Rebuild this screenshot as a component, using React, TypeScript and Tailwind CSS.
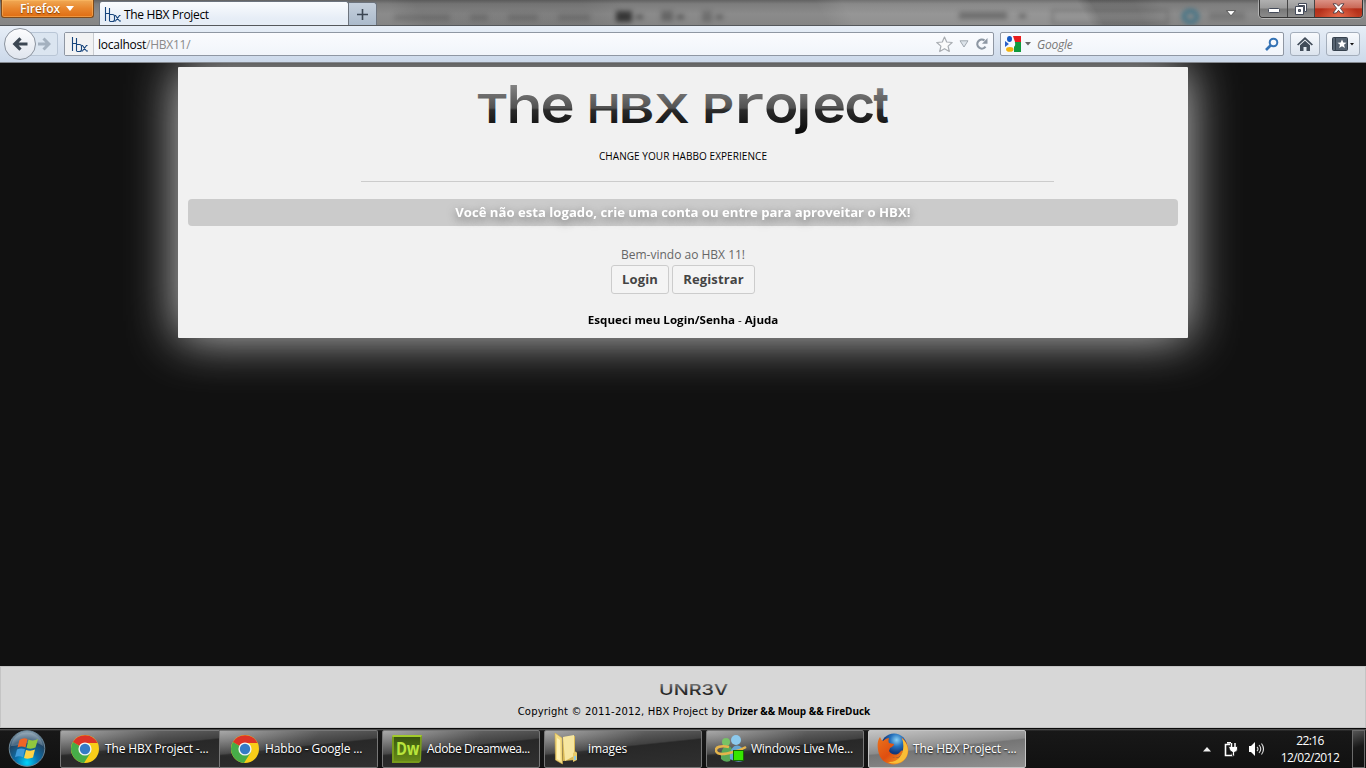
import React from "react";

const ui = "font-['Open_Sans','Noto_Sans',sans-serif]";

function HbxIcon({ className = "" }: { className?: string }) {
  return (
    <svg width="17" height="16" viewBox="0 0 17 16" className={className} fill="none" stroke="#17457c" strokeWidth="1.1">
      <path d="M1.5 0v14M5.5 1v13M1.500 6.500h4M5.500 7.500h3q2 0 2 2v3q0 2-2 2H5.500" />
      <path d="M10.500 8.500h1l4 5.500h1.500M16.500 8.500h-1l-4 5.500h-1" />
    </svg>
  );
}

function TitleBar() {
  return (
    <div className="relative flex h-[26px] shrink-0 overflow-hidden border-b border-[#55585c] bg-[linear-gradient(180deg,#626262_0,#7d7d7d_4px,#8b8b8b_14px,#858585_100%)]">
      <div className="pointer-events-none absolute inset-0 bg-[linear-gradient(60deg,transparent_0_29%,#00000014_31%_43%,transparent_46%_60%,#ffffff18_62%_79%,#00000018_80%_83%,transparent_85%)]" />
      <div className="pointer-events-none absolute left-[394px] top-[12px] flex blur-[2.5px]" aria-hidden="true">
        <i className="mr-[20px] mt-[2px] h-[7px] w-[56px] bg-[#0002]" />
        <i className="mr-[20px] mt-[2px] h-[7px] w-[18px] bg-[#0002]" />
        <i className="mr-[20px] mt-[2px] h-[7px] w-[30px] bg-[#0002]" />
        <i className="mr-[26px] mt-[2px] h-[7px] w-[32px] bg-[#0002]" />
        <i className="mr-[4px] -mt-px h-[11px] w-[16px] bg-[#0009]" />
        <i className="mr-[18px] mt-[3px] h-[4px] w-[7px] bg-[#0006]" />
        <i className="mr-[4px] -mt-px h-[10px] w-[12px] bg-[#0004]" />
        <i className="mr-[18px] mt-[3px] h-[4px] w-[7px] bg-[#0006]" />
        <i className="mr-[4px] -mt-px h-[11px] w-[10px] bg-[#0003]" />
        <i className="mr-[236px] mt-[3px] h-[4px] w-[7px] bg-[#0005]" />
        <i className="mr-[12px] h-[7px] w-[48px] bg-[#0004]" />
        <i className="mr-[26px] mt-[2px] h-[4px] w-[7px] bg-[#0005]" />
        <i className="mr-[14px] -mt-[2px] h-[14px] w-[116px] border border-[#0006]" />
        <i className="mr-[10px] -mt-[3px] h-[15px] w-[17px] rounded-full border-[4px] border-[#3a7186]" />
        <i className="h-[8px] w-[36px] bg-[#0002]" />
      </div>
      <button className={`relative ml-px flex h-[18px] w-[93px] items-center rounded-b-[3px] border border-t-0 border-[#7d4a1b] bg-[linear-gradient(#f0a955,#e8862d_50%,#df6c12)] pl-[18px] text-[12px] font-semibold text-white shadow-[inset_0_0_0_1px_#ffbf6a80] [text-shadow:0_1px_1px_#803c00] ${ui}`}>
        <span>Firefox</span>
        <svg className="ml-[6px]" width="8" height="5" viewBox="0 0 8 5"><path d="M0 0h8L4 5z" fill="#fff" /></svg>
      </button>
      <div className="relative ml-[5px] mt-px flex h-[25px] w-[250px] items-center rounded-t-[3px] border border-b-0 border-[#6d747e] bg-[linear-gradient(#fafcfe,#e6edf6_70%)] pl-[4px]">
        <HbxIcon className="mt-[2px]" />
        <span className={`ml-[3px] mt-[2px] whitespace-nowrap text-[12px] leading-[16px] -tracking-[0.32px] text-black ${ui}`}>The HBX Project</span>
      </div>
      <div className="relative mt-[2px] flex h-[24px] w-[28px] items-center justify-center rounded-tr-[3px] border border-b-0 border-l-0 border-[#6d747e] bg-[linear-gradient(#c5d0dd,#aab9ca)]">
        <svg width="11" height="11" viewBox="0 0 11 11"><path d="M5.5 0v11M0 5.5h11" stroke="#3b4653" strokeWidth="1.6" /></svg>
      </div>
      <div className="relative ml-auto flex">
        <svg className="mr-[23px] mt-[10px]" width="10" height="7" viewBox="0 0 10 7"><path d="M.5.6h9L5 5.800z" fill="#fff" stroke="#444" strokeWidth=".8" /></svg>
        <div className="mr-[3px] flex h-[18px] overflow-hidden rounded-b-[4px] border border-t-0 border-[#353535] shadow-[0_0_0_1px_#ffffff60]">
          <div className="flex w-[28px] items-center justify-center border-r border-[#444] bg-[linear-gradient(#b0b0b0,#9a9a9a_48%,#777_52%,#8c8c8c)]">
            <svg className="mt-[4px]" width="12" height="5" viewBox="0 0 12 5"><rect x=".5" y=".5" width="11" height="4" rx="1" fill="#fff" stroke="#444b5a" /></svg>
          </div>
          <div className="flex w-[27px] items-center justify-center border-r border-[#444] bg-[linear-gradient(#b0b0b0,#9a9a9a_48%,#777_52%,#8c8c8c)]">
            <svg width="12" height="12" viewBox="0 0 12 12" fill="#fff" stroke="#444b5a"><path d="M3.5.5h8v8h-2v-6h-6z" /><path fillRule="evenodd" d="M.5 3.5h8v8h-8zM3.5 6.5h2v2h-2z" /></svg>
          </div>
          <div className="flex w-[47px] items-center justify-center bg-[radial-gradient(ellipse_at_bottom,#e66a4b,transparent_60%),linear-gradient(#dc9285,#c96857_46%,#b32d18_52%,#bd3c23)]">
            <svg width="13" height="11" viewBox="0 0 13 11"><path d="M1 .8h3.3l2.2 2.4L8.700.8H12L8.400 5.300 12 10H8.700L6.500 7.300 4.300 10H1l3.600-4.700z" fill="#fff" stroke="#4c3a42" strokeWidth=".9" /></svg>
          </div>
        </div>
      </div>
    </div>
  );
}

function NavBar() {
  return (
    <div className="flex h-[37px] shrink-0 items-center border-b border-[#85898f] bg-[linear-gradient(#e7eef7,#ccd9ea)]">
      <div className="relative ml-[4px] h-[32px] w-[60px] shrink-0">
        <div className="absolute left-[20px] top-[4px] flex h-[24px] w-[34px] items-center justify-end rounded-r-[3px] border border-[#b9c6d6] bg-[#dbe5f0] pr-[6px]">
          <svg width="13" height="14" viewBox="0 0 13 14" fill="none" stroke="#a4b1bf" strokeWidth="3"><path d="M0 7h10M5.500 1.500l5.500 5.500-5.500 5.500" /></svg>
        </div>
        <div className="absolute left-0 top-0 flex size-[32px] items-center justify-center rounded-full border border-[#8b939e] bg-[linear-gradient(#fdfdfe,#dfe5ee)]">
          <svg width="16" height="16" viewBox="0 0 16 16" fill="none" stroke="#3c4753" strokeWidth="3.200"><path d="M15.500 8H3.500M8.500 2.300L2.800 8l5.700 5.700" /></svg>
        </div>
      </div>
      <div className="flex h-[24px] w-[930px] shrink-0 items-center rounded-[2px] border border-[#8f97a3] bg-[linear-gradient(#fafbfe,#f1f5fa)]">
        <div className="flex h-full w-[29px] items-center justify-center border-r border-[#c9ccd0] bg-[#f1f2f3]"><HbxIcon className="mt-[2px]" /></div>
        <span className={`ml-[4px] mt-px text-[12px] leading-[16px] -tracking-[0.25px] text-[#8a8a8a] ${ui}`}><span className="text-black">localhost</span>/HBX11/</span>
        <svg className="ml-auto" width="17" height="17" viewBox="0 0 17 17"><path d="M8.500 1l2.200 5 5.500.5-4.100 3.600 1.200 5.400-4.800-2.800-4.800 2.800 1.200-5.400L.8 6.500 6.300 6z" fill="#fbfbfb" stroke="#a9adb2" strokeWidth="1.200" strokeLinejoin="round" /></svg>
        <svg className="ml-[6px]" width="10" height="8" viewBox="0 0 10 8"><path d="M1 .8h8L5 7z" fill="#dce3ea" stroke="#a0a8b0" /></svg>
        <svg className="ml-[7px] mr-[5px]" width="12" height="12" viewBox="0 0 12 12"><path d="M9.500 8.700A4.500 4.500 0 1 1 8.500 2.400" fill="none" stroke="#8d97a3" strokeWidth="2.200" /><path d="M11.500 0v5.700H6z" fill="#8d97a3" /></svg>
      </div>
      <div className="ml-[6px] flex h-[24px] w-[284px] shrink-0 items-center rounded-[2px] border border-[#8f97a3] bg-[linear-gradient(#fafbfe,#f1f5fa)]">
        <svg className="ml-[4px]" width="16" height="16" viewBox="0 0 16 16">
          <path fill="#f7f9fc" d="M0 0h16v16H0z" /><path fill="#e91c1c" d="M8 0h8v6h-6z" /><path fill="#109a3d" d="M9 6h7v10H9z" /><path fill="#2b5fc7" d="M0 5l4 3-4 3z" />
          <circle cx="7" cy="8" r="3.200" fill="#f7f9fc" /><ellipse cx="4.500" cy="3" rx="2.500" ry="3" fill="#1459c4" /><ellipse cx="4.800" cy="13.400" rx="3.700" ry="2.300" fill="#f2b20d" />
        </svg>
        <svg className="ml-[4px]" width="6" height="4" viewBox="0 0 6 4"><path d="M0 0h6L3 3.500z" fill="#666" /></svg>
        <span className={`ml-[6px] mt-px text-[12px] italic leading-[16px] -tracking-[0.25px] text-[#777] ${ui}`}>Google</span>
        <svg className="ml-auto mr-[4px]" width="14" height="14" viewBox="0 0 14 14" fill="none" stroke="#3573b5"><circle cx="8.500" cy="5.500" r="3.800" strokeWidth="2" /><path d="M5.500 8.500L1 13" strokeWidth="2.600" /></svg>
      </div>
      <div className="ml-[6px] flex h-[24px] w-[30px] shrink-0 items-center justify-center rounded-[3px] border border-[#a4aebb] bg-[linear-gradient(#f8fafd,#dce4ee)]">
        <svg width="16" height="14" viewBox="0 0 16 14" fill="#414c59"><path d="M8 0l8 7.500-1.300 1L8 2.500l-6.700 6L0 7.500z" /><path d="M8 3.800l5 4.500V14H9.500v-4h-3v4H3V8.300z" /></svg>
      </div>
      <div className="ml-[6px] flex h-[24px] w-[34px] shrink-0 items-center justify-center rounded-[3px] border border-[#a4aebb] bg-[linear-gradient(#f8fafd,#dce4ee)]">
        <svg width="22" height="14" viewBox="0 0 22 14"><rect x=".5" y=".5" width="15" height="13" rx="1" fill="#566371" stroke="#36414d" /><path d="M3.500 1v12" stroke="#36414d" /><path d="M10 2.500l1.300 3 3.200.2-2.500 2 .9 3.200-2.900-1.700-2.900 1.700.9-3.200-2.500-2 3.200-.2z" fill="#fff" /><path d="M18 6h4l-2 2.500z" fill="#111" /></svg>
      </div>
    </div>
  );
}

// letter, x origin, font size, horizontal stretch, weight
const words: [string, number, number, number, number][][] = [
  [["T", 476, 40, 1.22, 600], ["h", 506, 52, 1.18, 500], ["e", 540.5, 53, 1.09, 600]],
  [["H", 587, 40, 1.12, 600], ["B", 618.5, 40, 1.36, 600], ["X", 654, 40, 1.24, 600]],
  [["P", 702, 40, 1.25, 600], ["r", 733.500, 53, 1.5, 500], ["o", 764, 53, 1.07, 600], ["j", 796.5, 53, 1.05, 600], ["e", 812.5, 53, 1.07, 600], ["c", 844.5, 53, 0.99, 600], ["t", 873.500, 52, 0.8, 700]],
];

function Logo() {
  return (
    <svg width="430" height="56" viewBox="468 80 430 56" className="block overflow-visible" role="img" aria-label="The HBX Project">
      <defs>
        <linearGradient id="ink" gradientUnits="userSpaceOnUse" x1="0" y1="-39" x2="0" y2="11">
          <stop offset="0" stopColor="#858585" /><stop offset=".48" stopColor="#515151" /><stop offset=".52" stopColor="#2b2b2b" /><stop offset="1" stopColor="#080808" />
        </linearGradient>
        <linearGradient id="inkJ" gradientUnits="userSpaceOnUse" x1="0" y1="-39" x2="0" y2="11">
          <stop offset=".19" stopColor="#777" stopOpacity="0" /><stop offset=".2" stopColor="#747474" /><stop offset=".48" stopColor="#515151" /><stop offset=".52" stopColor="#2b2b2b" /><stop offset="1" stopColor="#080808" />
        </linearGradient>
      </defs>
      {words.map((word, w) => (
        <g key={w} className="font-['Inter',sans-serif]">
          {word.map(([c, x, size, stretch, weight], i) => (
            <text key={i} transform={`translate(${x} 123) scale(${stretch} 1)`} fontSize={size} fontWeight={weight} fill={c === "j" ? "url(#inkJ)" : "url(#ink)"}>{c}</text>
          ))}
        </g>
      ))}
    </svg>
  );
}

function Page() {
  return (
    <main className="flex min-h-0 flex-1 flex-col items-center overflow-hidden bg-[#111] pt-[4px]">
      <section className={`flex h-[271px] w-[1010px] flex-col items-center rounded-[1px] bg-[#f1f1f1] pt-[13px] shadow-[0_0_50px_#ccc] ${ui}`}>
        <Logo />
        <p className="mt-[13px] whitespace-nowrap text-[10px] leading-[14px] tracking-[0.07px] text-black">CHANGE YOUR HABBO EXPERIENCE</p>
        <hr className="ml-[49px] mt-[18px] h-px w-[693px] border-0 bg-[#ccc]" />
        <div className="mt-[17px] flex h-[27px] w-[990px] items-center justify-center rounded-[4px] bg-[#cbcbcb]">
          <span className="inline-block scale-x-[1.095] whitespace-nowrap text-[12px] font-bold leading-[18px] text-white [text-shadow:0_3px_8px_#666]">Você não esta logado, crie uma conta ou entre para aproveitar o HBX!</span>
        </div>
        <p className="mt-[20px] whitespace-nowrap text-[12px] leading-[18px] text-[#666]">Bem-vindo ao HBX 11!</p>
        <div className="mt-px flex gap-[3px]">
          <button className="flex h-[29px] w-[58px] items-center justify-center rounded-[3px] border border-[#ccc] bg-[#f4f4f4] text-[13px] font-bold tracking-[0.14px] text-[#444]">Login</button>
          <button className="flex h-[29px] w-[83px] items-center justify-center rounded-[3px] border border-[#ccc] bg-[#f4f4f4] text-[13px] font-bold tracking-[0.14px] text-[#444]">Registrar</button>
        </div>
        <p className="mt-[19px] scale-x-[1.16] whitespace-nowrap text-[10px] font-bold leading-[15px] text-black">Esqueci meu Login/Senha <span className="font-normal">-</span> Ajuda</p>
      </section>
    </main>
  );
}

function Footer() {
  return (
    <footer className="flex h-[62px] shrink-0 flex-col items-center border border-[#c4c4c4] bg-[#d7d7d7] pl-[22px] pt-[13px]">
      <svg width="72" height="18" viewBox="657 680 72 18" className="mr-px block">
        <defs><linearGradient id="unr" x1="0" y1="0" x2="0" y2="1"><stop offset="0.2" stopColor="#777" /><stop offset=".55" stopColor="#333" /><stop offset="1" stopColor="#111" /></linearGradient></defs>
        <text x="658" y="695" fontSize="15" textLength="69" lengthAdjust="spacingAndGlyphs" fill="url(#unr)" className="font-['Inter',sans-serif] font-medium">UNR3V</text>
      </svg>
      <p className="mt-[6px] whitespace-nowrap font-['DejaVu_Sans',sans-serif] text-[10px] leading-[14px] tracking-[0.17px] text-black">
        Copyright © 2011-2012, HBX Project by <b className={`text-[10px] -tracking-[0.03px] ${ui}`}>Drizer &amp;&amp; Moup &amp;&amp; FireDuck</b>
      </p>
    </footer>
  );
}

function ChromeIcon() {
  return (
    <svg width="28" height="28" viewBox="0 0 28 28" className="shrink-0">
      <circle cx="14" cy="14" r="14" fill="#f8cd18" />
      <path d="M14 14L1.900 7A14 14 0 0 0 13 28l7-11z" fill="#47ad49" />
      <path d="M14 14L1.900 7A14 14 0 0 1 26.500 8H14z" fill="#dc3427" />
      <path d="M2 7l6 10 3-3z" fill="#47ad49" />
      <circle cx="14" cy="14" r="6.600" fill="#f0f3f5" /><circle cx="14" cy="14" r="5.200" fill="#347bc6" />
    </svg>
  );
}
function DwIcon() {
  return (
    <svg width="30" height="28" viewBox="0 0 30 28" className="shrink-0"><defs><linearGradient id="dw" x2="0" y2="1"><stop stopColor="#395510" /><stop offset="1" stopColor="#688b18" /></linearGradient></defs>
      <path d="M0 2l2-2h28l-1 26-2 2H0z" fill="#779b1b" /><path d="M2 2h26v24H2z" fill="url(#dw)" /><path d="M0 1l1-1h29l-1 2H1z" fill="#a2cb2b" />
      <text x="4" y="20" fontSize="17" fontWeight="700" textLength="23" lengthAdjust="spacingAndGlyphs" fill="#b9e53c" className="font-['Open_Sans',sans-serif]">Dw</text>
    </svg>
  );
}
function FolderIcon() {
  return (
    <svg width="24" height="32" viewBox="0 0 24 32" className="shrink-0"><path d="M9 4l12-1v24l-12 1z" fill="#d9b955" /><path d="M9 4l11-2v21l-9 5z" fill="#f6e6a0" /><path d="M1 0l7 5 .5 26L1.500 27z" fill="#f5dd83" stroke="#d2ad4a" strokeWidth=".6" /><path d="M3 5l3 2 .5 21L3 26z" fill="#fff2b5" /><path d="M19 20q3-3 4 0v7l-4 2z" fill="#e6ca6a" /><path d="M20 23h2v4h-2z" fill="#92cce0" /></svg>
  );
}
function MessengerIcon() {
  return (
    <svg width="32" height="28" viewBox="0 0 32 28" className="shrink-0"><circle cx="11" cy="7" r="4" fill="#77c366" /><path d="M6 24c-1-16 11-17 12-6l-3 8q-5 2-9-2z" fill="#58a857" /><circle cx="21" cy="5" r="5" fill="#8cc9ed" /><path d="M15 24c-2-16 13-18 14-5l-1 7q-7 2-13-2z" fill="#66a6d3" /><path d="M14 12C6 10 0 12 1 16c2 5 10 3 17 1q8-2 13-5" fill="none" stroke="#e5b44c" strokeWidth="2.500" /><rect x="18.500" y="15.500" width="10" height="10" fill="#36e600" stroke="#176806" strokeWidth="1" /></svg>
  );
}
function FirefoxIcon() {
  return (
    <svg width="32" height="32" viewBox="0 0 32 32" className="shrink-0">
      <defs><radialGradient id="globe" cx=".6" cy=".25"><stop stopColor="#8bd1f5" /><stop offset=".5" stopColor="#2672bd" /><stop offset="1" stopColor="#12387b" /></radialGradient><linearGradient id="fox" x2="1" y2="1"><stop stopColor="#eb731b" /><stop offset=".5" stopColor="#df4e10" /><stop offset="1" stopColor="#f7ad25" /></linearGradient></defs>
      <circle cx="17" cy="13.500" r="13" fill="url(#globe)" />
      <path d="M3 4q1 3 3 4 3-3 6-3-1 3 0 5l5 1q0 2-4 4l-1 3c2 4 8 5 11 1 1-1 2-2 3-1 0 5-6 8-11 6 6 3 14-2 12-12 0-3-1-5-3-8 9 6 10 19 1 25-8 5-20 2-23-8C0 14 0 8 3 4z" fill="url(#fox)" />
      <path d="M25 5c9 8 7 20-1 24-5 2-9 2-13 0 13 1 18-12 14-24z" fill="#f9bd36" />
    </svg>
  );
}

function Task({ label, icon, className = "", active = false }: { label: string; icon: React.ReactNode; className?: string; active?: boolean }) {
  return (
    <div className={`flex h-[38px] shrink-0 items-center overflow-hidden border ${active ? "rounded-[2px] border-[#c4c4c4] bg-[linear-gradient(174deg,#c4c4c4_0,#a0a0a0_30%,#8c8c8c_44%,#757575_47%,#929292_100%)]" : "border-[#777] bg-[radial-gradient(ellipse_100px_26px_at_0_0,#ffffff55,transparent),linear-gradient(174deg,#7c7c7c_0,#555_28%,#414141_44%,#282828_47%,#303030_100%)]"} ${className}`}>
      {icon}
      <span className={`whitespace-nowrap text-[12px] leading-[16px] text-white [text-shadow:0_1px_2px_#000] ${ui}`}>{label}</span>
    </div>
  );
}

function TaskBar() {
  return (
    <div className="flex h-[40px] shrink-0 border-t border-[#090909] bg-[linear-gradient(#5a5a5a_0,#181818_2px,#111_100%)] pt-px">
      <div className="flex w-[60px] shrink-0 pl-[8px]">
        <svg width="38" height="38" viewBox="0 0 38 38">
          <defs><radialGradient id="orb" cx=".5" cy=".9" r=".9"><stop stopColor="#00d5fb" /><stop offset=".35" stopColor="#0b70ac" /><stop offset=".7" stopColor="#214665" /><stop offset="1" stopColor="#91a7b5" /></radialGradient></defs>
          <circle cx="19" cy="18.500" r="17.800" fill="url(#orb)" stroke="#6c8798" />
          <path d="M3 16C6-2 32-2 35 16 24 8 14 16 3 16z" fill="#fff" opacity=".2" />
          <path d="M11.500 10q4-3 8-1l-2 8.500q-4-2-8 0z" fill="#ef6526" /><path d="M20.500 9.500q5 2 9.500-.5l-2.500 8.500q-4 2-9 .5z" fill="#91c73e" /><path d="M9 19.500q4-2 8-.2l-2 8q-4-2-8 0z" fill="#3f9bda" /><path d="M18 20q5 1.500 9-.5l-2 8q-5 2-9 .500z" fill="#ffd346" />
        </svg>
      </div>
      <Task className="w-[160px] rounded-l-[2px] gap-[6px] pl-[10px] tracking-[-0.12px]" label="The HBX Project -..." icon={<ChromeIcon />} />
      <Task className="w-[158px] rounded-r-[2px] border-l-0 gap-[6px] pl-[11px] tracking-[-0.12px]" label="Habbo - Google ..." icon={<ChromeIcon />} />
      <Task className="ml-[4px] w-[158px] rounded-[2px] gap-[5px] pl-[9px] tracking-[-0.4px]" label="Adobe Dreamwea..." icon={<DwIcon />} />
      <Task className="ml-[4px] w-[158px] rounded-[2px] gap-[10px] pl-[9px] tracking-[-0.1px]" label="images" icon={<FolderIcon />} />
      <Task className="ml-[4px] w-[158px] rounded-[2px] gap-[4px] pl-[8px] tracking-[-0.25px]" label="Windows Live Me..." icon={<MessengerIcon />} />
      <Task active className="ml-[4px] w-[158px] gap-[4px] pl-[8px] tracking-[-0.12px]" label="The HBX Project -..." icon={<FirefoxIcon />} />
      <div className="ml-auto flex items-center">
        <svg width="8" height="5" viewBox="0 0 8 5"><path d="M4 0l4 4.500H0z" fill="#eee" /></svg>
        <svg className="ml-[13px]" width="14" height="16" viewBox="0 0 14 16"><path d="M6 3.500H1.500v11h7v-2M3 1.800h4" fill="none" stroke="#fff" strokeWidth="1.600" /><path d="M4.500 5.500h9v2.500q0 3-3 3.200v3q0 1-2 1v-4q-3-1-3-3z" fill="#fff" stroke="#151515" strokeWidth=".8" /><path d="M7.500 2v4M11 2v4" stroke="#fff" strokeWidth="1.500" /></svg>
        <svg className="ml-[10px]" width="16" height="14" viewBox="0 0 16 14"><path d="M1 4h2l4-4v14l-4-4H1z" fill="#fff" /><path d="M9 5q2 2 0 4M11 3q3.500 4 0 8M13.500 1.500q4 5.500 0 11" fill="none" stroke="#ddd" strokeWidth="1.100" /></svg>
        <div className={`ml-[16px] mr-px flex w-[60px] flex-col items-center text-[12px] leading-[17px] text-white ${ui}`}>
          <span className="-tracking-[0.6px]">22:16</span><span className="whitespace-nowrap -tracking-[0.5px]">12/02/2012</span>
        </div>
        <div className="ml-[11px] mr-px h-[38px] w-[13px] border border-[#6b6b6b] bg-[linear-gradient(160deg,#555,#181818_45%,#101010)]" />
      </div>
    </div>
  );
}

export default function App() {
  return (
    <div className="flex h-screen w-full flex-col overflow-hidden bg-[#111]">
      <TitleBar />
      <NavBar />
      <Page />
      <Footer />
      <TaskBar />
    </div>
  );
}
